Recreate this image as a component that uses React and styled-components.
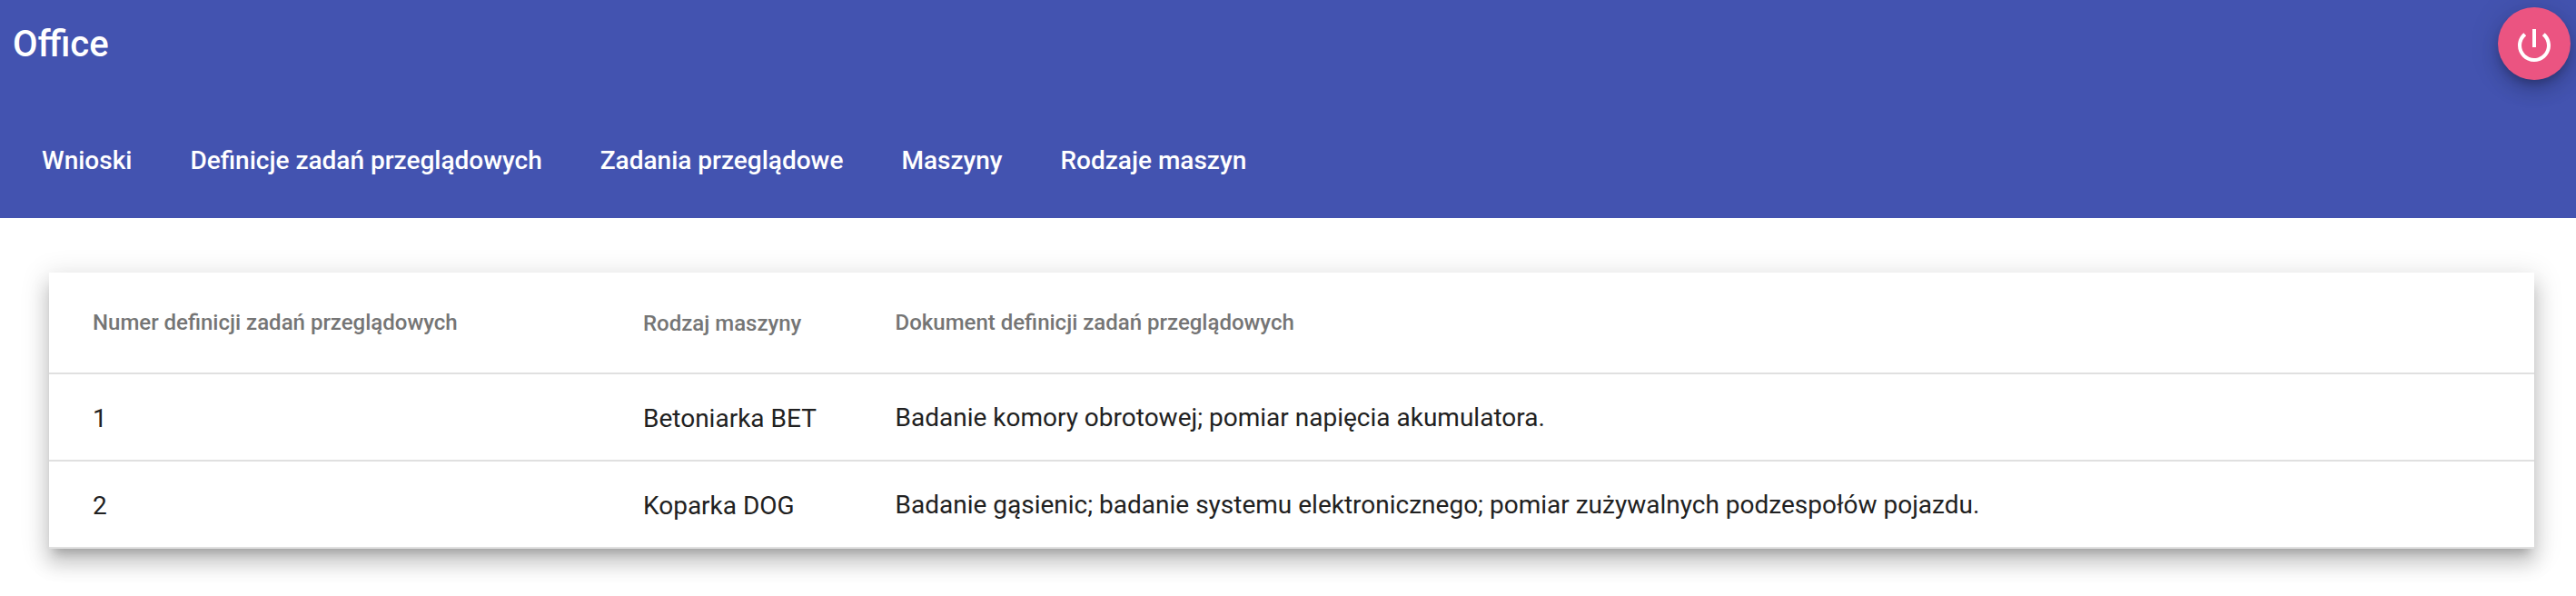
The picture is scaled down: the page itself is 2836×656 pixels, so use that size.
import React from "react";
import styled, { createGlobalStyle } from "styled-components";

const GlobalStyle = createGlobalStyle`
  body { margin: 0; background: #fff; font-family: Roboto, "Liberation Sans", sans-serif; }
  * { box-sizing: border-box; }
`;

const Page = styled.div`
  min-height: 100vh;
  display: flow-root;
`;
const Header = styled.header`
  height: 240px;
  background: #4353b0;
  color: #fff;
  display: flex;
  flex-direction: column;
`;
const TopBar = styled.div`
  display: flex;
  justify-content: space-between;
  align-items: flex-start;
  height: 112px;
  padding: 8px 6px 0 14px;
`;
const Title = styled.h1`
  margin: 17px 0 0;
  font-size: 40px;
  line-height: 48px;
  font-weight: 500;
`;
const PowerButton = styled.button`
  width: 80px;
  height: 80px;
  border: 0;
  border-radius: 50%;
  padding: 4px 0 0;
  display: flex;
  align-items: center;
  justify-content: center;
  background: #eb5481;
  color: #fff;
  box-shadow: 0 6px 10px -2px rgba(0, 0, 0, 0.2), 0 12px 20px 0 rgba(0, 0, 0, 0.14),
    0 2px 36px 0 rgba(0, 0, 0, 0.12);
`;
const Nav = styled.nav`
  display: flex;
  gap: 64px;
  padding: 49px 46px 0;
`;
const NavLink = styled.a`
  font-size: 28px;
  line-height: 32px;
  font-weight: 500;
  color: #fff;
  white-space: nowrap;
`;
const Card = styled.main`
  margin: 60px 46px 0 54px;
  background: #fff;
  box-shadow: 0 10px 10px -6px rgba(0, 0, 0, 0.2), 0 16px 20px 2px rgba(0, 0, 0, 0.14),
    0 6px 28px 4px rgba(0, 0, 0, 0.12);
`;
const Row = styled.div`
  display: grid;
  grid-template-columns: 606px 277.5px 1fr;
  align-items: center;
  height: ${(p) => (p.$head ? 112 : 96)}px;
  padding: 0 48px;
  border-bottom: 2px solid #e0e0e0;
  font-size: ${(p) => (p.$head ? 24 : 28)}px;
  font-weight: ${(p) => (p.$head ? 500 : 400)};
  color: ${(p) => (p.$head ? "#757575" : "#212121")};
`;
const Cell = styled.span`
  line-height: 32px;
  padding-top: ${(p) => p.$drop || 0}px;
  white-space: nowrap;
`;

const links = ["Wnioski", "Definicje zadań przeglądowych", "Zadania przeglądowe", "Maszyny", "Rodzaje maszyn"];
const rows = [
  ["1", "Betoniarka BET", "Badanie komory obrotowej; pomiar napięcia akumulatora."],
  ["2", "Koparka DOG", "Badanie gąsienic; badanie systemu elektronicznego; pomiar zużywalnych podzespołów pojazdu."],
];

export default function App() {
  return (
    <Page>
      <GlobalStyle />
      <Header>
        <TopBar>
          <Title>Office</Title>
          <PowerButton aria-label="Wyloguj">
            <svg width="48" height="48" viewBox="0 0 24 24" fill="currentColor">
              <path d="M13 3h-2v10h2V3zm4.83 2.17l-1.42 1.42C17.99 7.86 19 9.81 19 12c0 3.87-3.13 7-7 7s-7-3.13-7-7c0-2.19 1.01-4.14 2.58-5.42L6.17 5.17C4.23 6.82 3 9.26 3 12c0 4.97 4.03 9 9 9s9-4.03 9-9c0-2.74-1.23-5.18-3.17-6.83z" />
            </svg>
          </PowerButton>
        </TopBar>
        <Nav>
          {links.map((l) => (
            <NavLink key={l}>{l}</NavLink>
          ))}
        </Nav>
      </Header>
      <Card>
        <Row $head>
          <Cell>Numer definicji zadań przeglądowych</Cell>
          <Cell $drop={2}>Rodzaj maszyny</Cell>
          <Cell>Dokument definicji zadań przeglądowych</Cell>
        </Row>
        {rows.map(([id, kind, doc]) => (
          <Row key={id}>
            <Cell $drop={4}>{id}</Cell>
            <Cell $drop={4}>{kind}</Cell>
            <Cell $drop={2}>{doc}</Cell>
          </Row>
        ))}
      </Card>
    </Page>
  );
}
